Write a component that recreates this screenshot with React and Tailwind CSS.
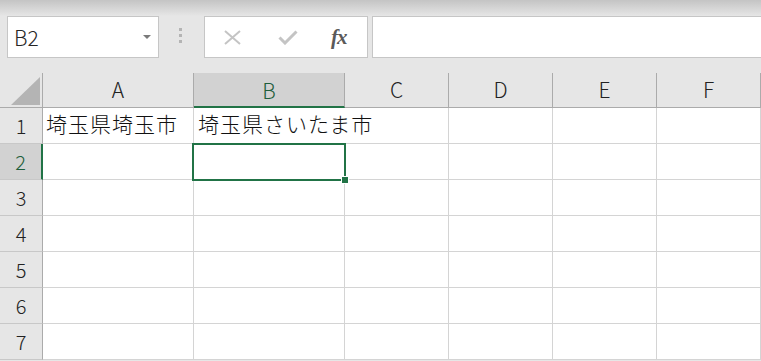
import React from "react";

const cols = [
  { name: "A", w: "w-[151px]" },
  { name: "B", w: "w-[151px]" },
  { name: "C", w: "w-[104px]" },
  { name: "D", w: "w-[104px]" },
  { name: "E", w: "w-[104px]" },
  { name: "F", w: "w-[104px]" },
];

const cellText = { "1-A": "埼玉県埼玉市", "1-B": "埼玉県さいたま市" };

function Toolbar() {
  return (
    <div className="flex h-[42px]">
      <div className="ml-[7px] w-[152px] border border-[#c6c6c6] bg-white flex items-center justify-between pl-[6px] pr-[7px]">
        <span className="text-[21px] font-light text-[#262626] leading-none">B2</span>
        <span className="w-0 h-0 border-l-[4px] border-r-[4px] border-t-[4px] border-l-transparent border-r-transparent border-t-[#7a7a7a]" />
      </div>
      <div className="w-[45px] flex flex-col items-start pl-[20px] pt-[12px] gap-[3px]">
        <span className="w-[3px] h-[3px] bg-[#b4b4b4]" />
        <span className="w-[3px] h-[3px] bg-[#b4b4b4]" />
        <span className="w-[3px] h-[3px] bg-[#b4b4b4]" />
      </div>
      <div className="w-[164px] border border-[#c6c6c6] bg-white flex items-center">
        <svg className="ml-[18px]" width="19" height="15" viewBox="0 0 19 15">
          <path d="M2 1 L17 14 M17 1 L2 14" stroke="#c4c4c4" strokeWidth="2" fill="none" />
        </svg>
        <svg className="ml-[36px]" width="20" height="15" viewBox="0 0 20 15">
          <path d="M1.5 7.5 L7 13 L18.5 1.5" stroke="#c4c4c4" strokeWidth="3" fill="none" />
        </svg>
        <span className="ml-[33px] font-['Liberation_Serif',serif] italic font-bold text-[21px] text-[#5a5a5a] leading-none tracking-[-1px]">
          fx
        </span>
      </div>
      <div className="ml-[4px] flex-1 border border-r-0 border-[#c6c6c6] bg-white" />
    </div>
  );
}

function HeaderRow() {
  return (
    <div className="flex h-[35px]">
      <div className="w-[43px] border-r border-b border-[#ababab] flex items-end justify-end pr-[2px] pb-[2px]">
        <svg width="29" height="28" viewBox="0 0 29 28">
          <polygon points="29,0 29,28 0,28" fill="#b4b4b4" />
        </svg>
      </div>
      {cols.map((c) =>
        c.name === "B" ? (
          <div
            key={c.name}
            className={`${c.w} bg-[#d2d2d2] border-r border-r-[#ababab] border-b-2 border-b-[#217346] flex items-center justify-center text-[21px] font-light text-[#1e5e3b]`}
          >
            <span className="mt-[2px]">{c.name}</span>
          </div>
        ) : (
          <div
            key={c.name}
            className={`${c.w} border-r border-b border-[#ababab] flex items-center justify-center text-[21px] font-light text-[#222]`}
          >
            {c.name}
          </div>
        )
      )}
    </div>
  );
}

function Row({ n }) {
  const active = n === 2;
  return (
    <div className="flex h-[36px]">
      {active ? (
        <div className="w-[43px] bg-[#d2d2d2] border-r-2 border-r-[#217346] border-b border-b-[#c8c8c8] flex items-center justify-center text-[20px] font-light text-[#1e5e3b]">
          {n}
        </div>
      ) : (
        <div className="w-[43px] border-r border-r-[#ababab] border-b border-b-[#c8c8c8] flex items-center justify-center text-[20px] font-light text-[#222]">
          {n}
        </div>
      )}
      {cols.map((c) => {
        const text = cellText[`${n}-${c.name}`];
        const selected = n === 2 && c.name === "B";
        const overflow = n === 1 && c.name === "B";
        return (
          <div
            key={c.name}
            className={`${c.w} relative bg-white border-r border-b border-[#d4d4d4] ${
              overflow ? "border-r-white" : ""
            } flex items-center ${c.name === "A" ? "pl-[3px]" : "pl-[4px]"}`}
          >
            {text && (
              <span className="relative z-10 whitespace-nowrap text-[21px] font-light tracking-[1px] text-[#111] leading-none mb-[4px]">
                {text}
              </span>
            )}
            {selected && (
              <div className="absolute z-20 top-[-1px] left-[-2px] right-[-2px] bottom-[-2px] border-2 border-[#217346]">
                <div className="absolute right-[-5px] bottom-[-5px] w-[8px] h-[8px] bg-[#217346] border border-white" />
              </div>
            )}
          </div>
        );
      })}
    </div>
  );
}

export default function App() {
  return (
    <div className="w-[761px] h-[361px] overflow-hidden bg-[#e6e6e6] font-['Noto_Sans_CJK_JP',sans-serif]">
      <div className="h-[16px] bg-linear-to-b from-[#c4c4c4] to-[#e6e6e6]" />
      <Toolbar />
      <div className="h-[15px]" />
      <HeaderRow />
      {[1, 2, 3, 4, 5, 6, 7].map((n) => (
        <Row key={n} n={n} />
      ))}
    </div>
  );
}
